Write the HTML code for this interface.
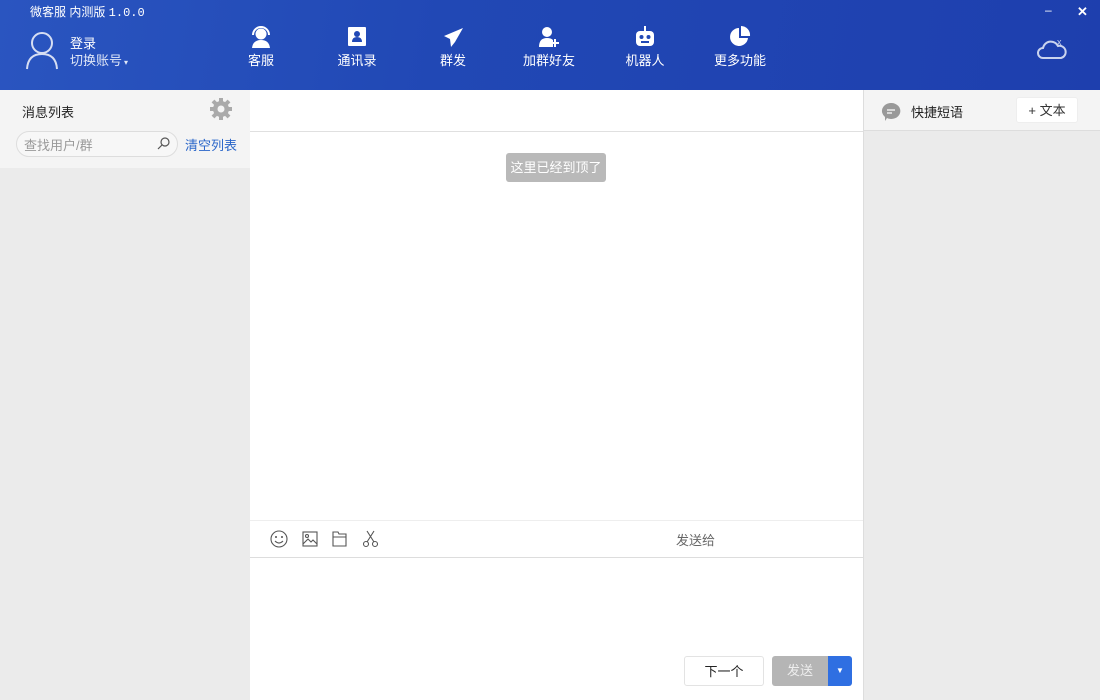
<!DOCTYPE html>
<html><head><meta charset="utf-8"><style>
*{margin:0;padding:0;box-sizing:border-box}
body{width:1100px;height:700px;overflow:hidden;position:relative;font-family:"Liberation Sans","Noto Sans CJK SC",sans-serif;background:#ebebeb;font-size:13px;color:#333}
.top{position:absolute;left:0;top:0;width:1100px;height:90px;background:linear-gradient(100deg,#2a55c0 0%,#2148b5 40%,#1e3fae 100%)}
.a{position:absolute}
.w{color:#fff}
.nav{position:absolute;top:26px;width:60px;text-align:center;color:#fff;font-size:13px;line-height:16px}
.nav svg{display:block;margin:0 auto 5px}
</style></head><body>
<div class="top">
 <div class="a w" style="left:30px;top:3px;font-size:12px">微客服 内测版 <span style="font-family:'Liberation Mono',monospace;font-size:12px">1.0.0</span></div>
 <svg class="a" style="left:24px;top:30px" width="36" height="40" viewBox="0 0 36 40"><circle cx="18" cy="13" r="10" fill="none" stroke="#d6def3" stroke-width="2"/><path d="M3 39 Q4 24 18 24 Q32 24 33 39" fill="none" stroke="#d6def3" stroke-width="2"/></svg>
 <div class="a w" style="left:70px;top:33px">登录</div>
 <div class="a" style="left:70px;top:50px;color:#dfe6f7">切换账号<span style="font-size:8px;margin-left:2px">▾</span></div>
 <div class="nav" style="left:231px"><svg width="22" height="22" viewBox="0 0 22 22"><circle cx="11" cy="8" r="5.5" fill="#fff"/><path d="M3 9a8 8 0 0 1 16 0" fill="none" stroke="#fff" stroke-width="2"/><path d="M2 22Q3 14 11 14Q19 14 20 22Z" fill="#fff"/></svg>客服</div>
 <div class="nav" style="left:327px"><svg width="22" height="22" viewBox="0 0 22 22"><rect x="2" y="1" width="18" height="19" rx="1" fill="#fff"/><circle cx="11" cy="8" r="3" fill="#2148b5"/><path d="M6 16Q6 11 11 11Q16 11 16 16Z" fill="#2148b5"/></svg>通讯录</div>
 <div class="nav" style="left:423px"><svg width="22" height="22" viewBox="0 0 22 22"><path d="M21 2L2 10l6 3 1 8 4-5 8-14z" fill="#fff"/></svg>群发</div>
 <div class="nav" style="left:519px;width:60px"><svg width="22" height="22" viewBox="0 0 22 22"><circle cx="9" cy="6" r="5" fill="#fff"/><path d="M1 21Q1 12 9 12Q13 12 15 14V21Z" fill="#fff"/><path d="M17 13v8M13 17h8" stroke="#fff" stroke-width="2"/></svg>加群好友</div>
 <div class="nav" style="left:615px"><svg width="22" height="22" viewBox="0 0 22 22"><rect x="10" y="0" width="2" height="5" fill="#fff"/><rect x="2" y="5" width="18" height="15" rx="4" fill="#fff"/><circle cx="7.5" cy="11" r="2" fill="#2148b5"/><circle cx="14.5" cy="11" r="2" fill="#2148b5"/><rect x="7" y="15" width="8" height="2" fill="#2148b5"/></svg>机器人</div>
 <div class="nav" style="left:710px;width:60px"><svg width="22" height="22" viewBox="0 0 22 22"><path d="M10 2a9 9 0 1 0 9 10h-9z" fill="#fff"/><path d="M12 0v10h9A9 9 0 0 0 12 0z" fill="#fff"/></svg>更多功能</div>
 <div class="a w" style="left:1045px;top:3px;font-size:12px">–</div>
 <div class="a w" style="left:1077px;top:4px;font-size:13px;font-weight:bold">✕</div>
 <svg class="a" style="left:1036px;top:36px" width="32" height="26" viewBox="0 0 32 26"><path d="M7 22a5 5 0 0 1 0-10a8 8 0 0 1 15-2a6 6 0 0 1 3 12z" fill="none" stroke="#c9d3ee" stroke-width="2"/><text x="21" y="9" fill="#c9d3ee" font-size="9" font-family="Liberation Sans">x</text></svg>
</div>
<div class="a" style="left:0;top:90px;width:250px;height:78px;background:#f4f4f4"></div>
<div class="a" style="left:22px;top:102px;font-size:13px;color:#222">消息列表</div>
<svg class="a" style="left:209px;top:97px" width="24" height="24" viewBox="0 0 24 24"><g fill="#aaa"><circle cx="12" cy="12" r="8"/><g stroke="#aaa" stroke-width="4"><path d="M12 1v22M1 12h22M4 4l16 16M20 4L4 20"/></g></g><circle cx="12" cy="12" r="3.5" fill="#f4f4f4"/></svg>
<div class="a" style="left:16px;top:131px;width:162px;height:26px;border:1px solid #ddd;border-radius:13px;background:#f7f7f7;color:#999;padding:3px 0 0 7px">查找用户/群</div>
<svg class="a" style="left:157px;top:137px" width="13" height="13" viewBox="0 0 13 13"><circle cx="8" cy="5" r="4" fill="none" stroke="#555" stroke-width="1.2"/><path d="M5 8L1 12" stroke="#555" stroke-width="1.2"/></svg>
<div class="a" style="left:185px;top:135px;color:#2a66c9;font-size:13px">清空列表</div>
<div class="a" style="left:250px;top:90px;width:613px;height:610px;background:#fff"></div>
<div class="a" style="left:250px;top:131px;width:613px;height:1px;background:#e0e0e0"></div>
<div class="a" style="left:506px;top:153px;width:100px;height:29px;background:#b9b9b9;border-radius:3px;color:#fff;text-align:center;line-height:29px">这里已经到顶了</div>
<div class="a" style="left:250px;top:520px;width:613px;height:1px;background:#eee"></div>
<div class="a" style="left:250px;top:557px;width:613px;height:1px;background:#ddd"></div>
<svg class="a" style="left:269px;top:529px" width="120" height="20" viewBox="0 0 120 20"><g fill="none" stroke="#555" stroke-width="1.1"><circle cx="10" cy="10" r="8"/><circle cx="7" cy="8" r=".5"/><circle cx="13" cy="8" r=".5"/><path d="M6 12q4 4 8 0"/><rect x="34" y="3" width="14" height="14"/><circle cx="38" cy="7" r="1.5"/><path d="M34 15l5-5 3 3 2-2 4 4"/><path d="M64 3h5l1 2h7v12h-13z M64 8h13"/><circle cx="97" cy="15" r="2.5"/><circle cx="106" cy="15" r="2.5"/><path d="M98 13l7-11M105 13l-7-11"/></g></svg>
<div class="a" style="left:676px;top:530px;color:#666">发送给</div>
<div class="a" style="left:684px;top:656px;width:80px;height:30px;border:1px solid #e3e3e3;border-radius:3px;text-align:center;line-height:29px;color:#222">下一个</div>
<div class="a" style="left:772px;top:656px;width:56px;height:30px;background:#b5b5b5;border-radius:3px 0 0 3px;text-align:center;line-height:30px;color:#eee">发送</div>
<div class="a" style="left:828px;top:656px;width:24px;height:30px;background:#2f6fe2;border-radius:0 3px 3px 0;color:#fff;text-align:center;line-height:30px;font-size:8px">▼</div>
<div class="a" style="left:863px;top:90px;width:1px;height:610px;background:#ddd"></div>
<div class="a" style="left:864px;top:90px;width:236px;height:41px;background:#f4f4f4;border-bottom:1px solid #ddd"></div>
<svg class="a" style="left:881px;top:102px" width="20" height="20" viewBox="0 0 20 20"><path d="M10 1a9 8 0 1 1-4 15l-2 3 0-4A9 8 0 0 1 10 1z" fill="#999"/><path d="M6 8h8M6 11h5" stroke="#fff" stroke-width="1.3"/></svg>
<div class="a" style="left:911px;top:102px;color:#222">快捷短语</div>
<div class="a" style="left:1016px;top:97px;width:62px;height:26px;background:#fff;border:1px solid #eee;border-radius:3px;text-align:center;line-height:25px;color:#333">+ 文本</div>
</body></html>
